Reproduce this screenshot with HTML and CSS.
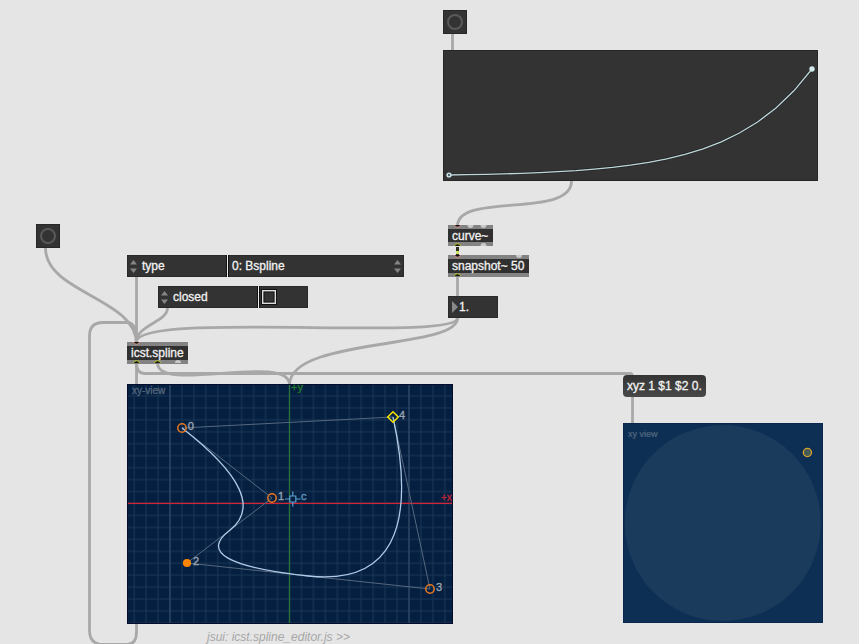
FILE: index.html
```html
<!DOCTYPE html>
<html lang="en">
<head>
<meta charset="utf-8">
<title>Spline patcher</title>
<link rel="stylesheet" href="styles.css">
</head>
<body>
<main class="patcher">
  <svg class="cords" viewBox="0 0 859 644" aria-hidden="true">
    <path d="M452.500 34V51"/>
    <path d="M571.500 181C571.500 219 457.500 192 457.500 226"/>
    <path d="M457.500 276V297"/>
    <path d="M45.500 248C45.500 293 136.500 298 136.500 344"/>
    <path d="M136.500 276V344"/>
    <path d="M167.500 308C167.500 322 136.500 325 136.500 342"/>
    <path d="M457.500 318C457.500 342 136.500 311 136.500 342"/>
    <path d="M457.500 318C457.500 350 289.500 337 289.500 385"/>
    <path d="M136.500 344C136.500 329 134 322.500 127 322.500H103C94 322.500 89.500 327 89.500 336V630C89.500 640 94 644.500 103 644.500H127Q136.500 644.500 136.500 632V623"/>
    <path d="M136.500 363V385"/>
    <path d="M136.500 363Q136.500 373.500 145 373.500H630Q632.500 373.500 632.500 377"/>
    <path d="M157.500 363C157.500 394 289.500 352 289.500 385"/>
    <path d="M632.500 396V424"/>
  </svg>

  <div class="node bang bang-top"><i></i></div>
  <div class="node bang bang-left"><i></i></div>

  <div class="node function">
    <svg viewBox="443 50 375 131">
      <polyline class="halo" points="449,175 467.200,174.700 485.300,174.300 503.500,173.900 521.600,173.300 539.800,172.600 557.900,171.700 576.100,170.600 594.200,169.100 612.400,167.400 630.500,165.100 648.700,162.300 666.800,158.800 685,154.300 703.100,148.800 721.300,141.800 739.400,133 757.600,122 775.700,108.200 793.900,90.800 812,69"/>
      <polyline class="curve" points="449,175 467.200,174.700 485.300,174.300 503.500,173.900 521.600,173.300 539.800,172.600 557.900,171.700 576.100,170.600 594.200,169.100 612.400,167.400 630.500,165.100 648.700,162.300 666.800,158.800 685,154.300 703.100,148.800 721.300,141.800 739.400,133 757.600,122 775.700,108.200 793.900,90.800 812,69"/>
      <circle class="handle" cx="449" cy="175" r="2.600"/>
      <circle cx="449" cy="175" r="1.200" fill="#526568"/>
      <circle class="handle" cx="812" cy="69" r="2.700"/>
    </svg>
  </div>

  <div class="node object curve-object">
    <span>curve~</span>
    <svg class="ports" viewBox="0 0 45 21"><g class="spare"><path d="M19.500 0a3 3 0 0 0 6 0zM32.500 0a3 3 0 0 0 6 0zM32.500 21a3 3 0 0 1 6 0z"/></g><path class="in" d="M6.500 0a3 2.200 0 0 0 6 0"/><path class="out" d="M6.500 21a3 2.200 0 0 1 6 0"/></svg>
  </div>
  <div class="node signal"></div>
  <div class="node object snapshot-object">
    <span>snapshot~ 50</span>
    <svg class="ports" viewBox="0 0 81 21"><g class="spare"><path d="M68 0a3 3 0 0 0 6 0z"/></g><path class="in" d="M6.500 0a3 2.200 0 0 0 6 0"/><path class="out" d="M6.500 21a3 2.200 0 0 1 6 0"/></svg>
  </div>
  <div class="node number"><i></i><span>1.</span></div>

  <div class="node attr attr-type">
    <div class="key"><svg class="arrows" viewBox="0 0 7 13"><path d="M0 4.500 3.500 0 7 4.500zM0 8.500 3.500 13 7 8.500z"/></svg><span>type</span></div>
    <div class="value"><span>0: Bspline</span><svg class="arrows" viewBox="0 0 7 13"><path d="M0 4.500 3.500 0 7 4.500zM0 8.500 3.500 13 7 8.500z"/></svg></div>
  </div>
  <div class="node attr attr-closed">
    <div class="key"><svg class="arrows" viewBox="0 0 7 13"><path d="M0 4.500 3.500 0 7 4.500zM0 8.500 3.500 13 7 8.500z"/></svg><span>closed</span></div>
    <div class="value"><svg class="check" viewBox="0 0 16 16"><rect x="1.700" y="1.700" width="12.600" height="12.600" fill="none" stroke="#111" stroke-width="3.400"/><rect x="1.700" y="1.700" width="12.600" height="12.600" fill="none" stroke="#dedede" stroke-width="1.400"/></svg></div>
  </div>

  <div class="node object spline-object">
    <span>icst.spline</span>
    <svg class="ports" viewBox="0 0 61 21"><g class="spare"><path d="M48 21a3 3 0 0 1 6 0z"/></g><path class="in" d="M6.500 0a3 2.200 0 0 0 6 0"/><path class="out" d="M6.500 21a3 2.200 0 0 1 6 0M27.500 21a3 2.200 0 0 1 6 0"/></svg>
  </div>

  <svg class="node editor" viewBox="127 384 326 240">
    <defs>
      <pattern id="grid" x="283.525" y="497.525" width="11.950" height="11.950" patternUnits="userSpaceOnUse">
        <path d="M5.975 0V11.950M0 5.975H11.950" stroke="#1b3857" stroke-width="1" fill="none"/>
      </pattern>
    </defs>
    <rect x="127" y="384" width="326" height="240" fill="#041f40"/>
    <rect x="127" y="384" width="326" height="240" fill="url(#grid)"/>
    <path d="M170 384V624M409 384V624" stroke="#2b4362" stroke-width="1.500"/>
    <path d="M289.500 384V624" stroke="#28753a" stroke-width="1.200"/>
    <path d="M127 503.400H453" stroke="#d02638" stroke-width="1.400"/>
    <rect class="frame" x="127.500" y="384.500" width="325" height="239"/>
    <polyline class="hull" points="182,428 272,498 187,563 430,589 393,417 182,428"/>
    <path class="spline" d="M182 428Q272 498 229.500 530.500Q187 563 308.500 576Q430 589 393 417"/>
    <g class="points"><circle cx="182" cy="428" r="4.200"/><circle cx="272" cy="498" r="4.200"/><circle cx="430" cy="589" r="4.200"/></g>
    <circle cx="187" cy="563" r="4.100" fill="#ff8500"/>
    <path d="M393 411.700 398.300 417 393 422.300 387.700 417Z" fill="none" stroke="#f4e600" stroke-width="1.500"/>
    <path d="M289.800 496H295.800V502H289.800ZM285 499H289.800M295.800 499H300.500M292.800 491.500V496M292.800 502V506.500" fill="none" stroke="#5b9fd0" stroke-width="1.200"/>
    <g class="labels">
      <text x="187.800" y="430">0</text><text x="278" y="500">1</text><text x="193" y="565">2</text><text x="436" y="591">3</text><text x="399" y="419">4</text>
      <text class="center" x="301" y="500">c</text>
    </g>
    <text class="axis axis-y" x="291" y="391">+y</text>
    <text class="axis axis-x" x="441" y="500.500">+x</text>
    <text class="caption" x="132" y="394">xy-view</text>
  </svg>

  <div class="node comment">jsui: icst.spline_editor.js &gt;&gt;</div>

  <div class="node message">xyz 1 $1 $2 0.</div>

  <svg class="node monitor" viewBox="623 423 200 200">
    <rect x="623" y="423" width="200" height="200" fill="#0e2f54"/>
    <circle cx="722.800" cy="523" r="98" fill="#1b3b5c"/>
    <rect x="623.500" y="423.500" width="199" height="199" fill="none" stroke="#0a2750"/>
    <text x="628" y="436.500">xy view</text>
    <circle cx="807.400" cy="452.500" r="4.100" fill="#435c58" stroke="#dca32c" stroke-width="1.300"/>
  </svg>
</main>
</body>
</html>
```
FILE: styles.css
```css
* { box-sizing: border-box; }

body {
  margin: 0;
  background: #e5e5e5;
  font: 12px/1 "Liberation Sans", Arial, sans-serif;
  color: #f2f2f2;
}

.patcher {
  position: relative;
  width: 859px;
  height: 644px;
  overflow: hidden;
}

.cords {
  display: block;
  width: 859px;
  height: 644px;
}

.cords path {
  fill: none;
  stroke: #a8a8a8;
  stroke-width: 2.8;
}

.node { position: absolute; }

.object span,
.number span,
.attr span,
.message {
  -webkit-text-stroke: 0.3px #f2f2f2;
  white-space: nowrap;
}

/* Bang buttons */
.bang {
  display: grid;
  place-items: center;
  width: 24px;
  height: 24px;
  background: #333;
  border: 1px solid #272727;
}
.bang i {
  width: 16px;
  height: 16px;
  border: 2px solid #595959;
  border-radius: 50%;
}
.bang-top { left: 443px; top: 10px; }
.bang-left { left: 36px; top: 224px; }

/* Function graph */
.function {
  left: 443px;
  top: 50px;
  width: 375px;
  height: 131px;
  background: #333;
  border: 1px solid #262626;
}
.function svg {
  display: block;
  width: 375px;
  height: 131px;
  margin: -1px;
}
.function polyline { fill: none; }
.halo { stroke: #222; stroke-width: 2.6; }
.curve { stroke: #bdd8db; stroke-width: 1.3; }
.handle { fill: #d0e8ec; }

/* Object boxes */
.object {
  display: flex;
  align-items: center;
  height: 21px;
  padding-left: 4px;
  background: #303030;
  border-top: 4px solid #838383;
  border-bottom: 4px solid #838383;
}
.object span {
  padding-top: 1px;
  line-height: 13px;
}
.ports {
  position: absolute;
  left: 0;
  top: -4px;
  width: 100%;
  height: 21px;
}
.spare { fill: #c9c9c9; }
.in { fill: #111; stroke: #e59a8f; }
.out { fill: #111; stroke: #c5d028; }
.curve-object { left: 448px; top: 225px; width: 45px; }
.snapshot-object { left: 448px; top: 255px; width: 81px; height: 22px; }
.spline-object { left: 127px; top: 342px; width: 61px; height: 22px; }

.signal {
  left: 456px;
  top: 247px;
  width: 3px;
  height: 8px;
  background: repeating-linear-gradient(#2d2d20 0 4px, #cde25d 4px 7px);
}

.number {
  left: 448px;
  top: 296px;
  display: flex;
  align-items: center;
  gap: 1px;
  width: 50px;
  height: 22px;
  padding-left: 3px;
  background: #333;
  border: 1px solid #2a2a2a;
}
.number i {
  width: 6px;
  height: 12px;
  background: #898989;
  clip-path: polygon(0 0, 100% 50%, 0 100%);
}

/* Attribute editors */
.attr {
  display: flex;
  height: 22px;
  background: #333;
  box-shadow: inset 0 0 0 1px #292929;
}
.key,
.value {
  display: flex;
  align-items: center;
}
.key { gap: 5px; padding-left: 3px; }
.value {
  flex: 1;
  padding-left: 4px;
  border-left: 1px solid #eee;
  box-shadow: -1px 0 #111, inset 1px 0 #111;
}
.arrows {
  width: 7px;
  height: 13px;
  fill: #858585;
}
.value .arrows { margin: 0 3px 0 auto; }
.attr-type { left: 127px; top: 255px; width: 277px; }
.attr-type .key { width: 100px; }
.attr-closed { left: 158px; top: 286px; width: 150px; }
.attr-closed .key { width: 100px; }
.attr-closed .value { padding-left: 2px; }
.check {
  width: 16px;
  height: 16px;
}

/* Spline editor */
.editor {
  left: 127px;
  top: 384px;
  width: 326px;
  height: 240px;
  overflow: visible;
}
.frame { fill: none; stroke: #050d2c; }
.hull { fill: none; stroke: #57687f; stroke-width: 1; }
.spline { fill: none; stroke: #b0cae7; stroke-width: 1.3; }
.points { fill: none; stroke: #e87822; stroke-width: 1.5; }
.labels { font-size: 11px; fill: #96a0ae; stroke: #96a0ae; stroke-width: 0.4; }
.center { fill: #5b8fb8; stroke: #5b8fb8; }
.axis { font-size: 11px; stroke-width: 0.3; }
.axis-y { fill: #237a27; stroke: #237a27; }
.axis-x { font-size: 10px; fill: #c32330; stroke: #c32330; }
.caption { font-size: 10px; fill: #54667c; stroke: #54667c; stroke-width: 0.3; }

.comment {
  left: 207px;
  top: 631px;
  color: #a7a7a7;
  font-size: 12px;
  font-style: italic;
  line-height: 12px;
  white-space: nowrap;
}

.message {
  left: 623px;
  top: 375px;
  display: flex;
  align-items: center;
  width: 83px;
  height: 22px;
  padding-left: 4px;
  border-radius: 4px;
  background: linear-gradient(#343434, #484848);
}

.monitor {
  left: 623px;
  top: 423px;
  width: 200px;
  height: 200px;
}
.monitor text { font-size: 9px; fill: #526981; stroke: #526981; stroke-width: 0.2; }
```
